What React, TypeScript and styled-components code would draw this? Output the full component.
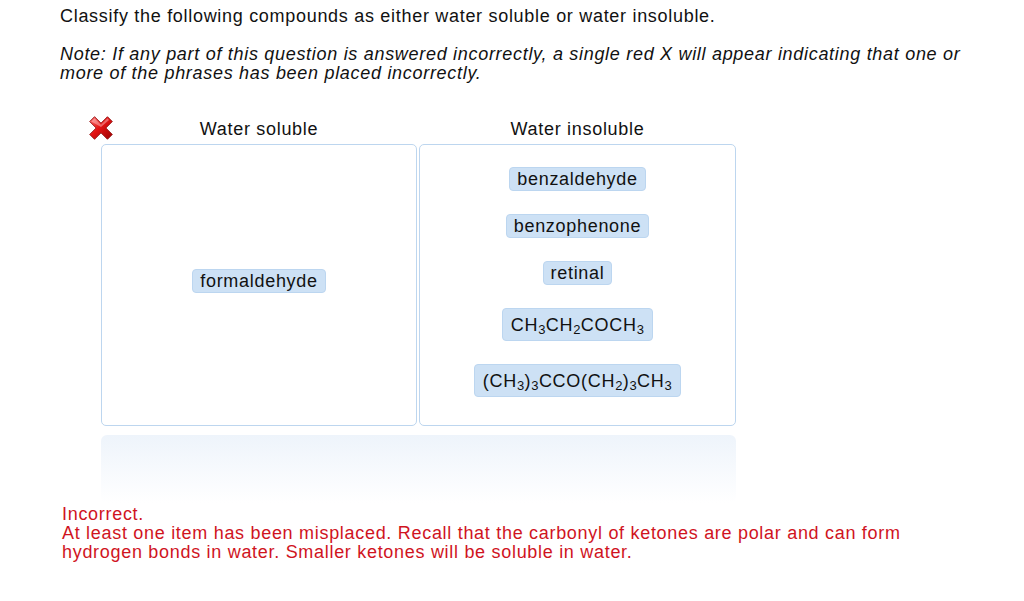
import React from "react";
import styled, { createGlobalStyle } from "styled-components";

const Global = createGlobalStyle`
  html, body { margin: 0; padding: 0; background: #fff; }
  body { font-family: "Liberation Sans", Arial, sans-serif; color: #111; }
`;

const Page = styled.div`
  padding: 6px 0 0 60px;
  width: 964px;
  font-size: 18px;
  letter-spacing: 0.7px;
`;

const Title = styled.p`
  margin: 0;
  line-height: 20px;
`;

const Note = styled.p`
  margin: 19px 0 0 0;
  line-height: 19px;
  font-style: italic;
  width: 910px;
`;

const Board = styled.div`
  position: relative;
  margin: 35px 0 0 41px;
  width: 635px;
`;

const Mark = styled.svg`
  position: absolute;
  left: -14px;
  top: -4px;
  width: 28px;
  height: 28px;
`;

const Columns = styled.div`
  display: grid;
  grid-template-columns: 316px 317px;
  column-gap: 2px;
`;

const Column = styled.div`
  display: flex;
  flex-direction: column;
`;

const Header = styled.div`
  height: 26px;
  line-height: 20px;
  text-align: center;
  padding-top: 1px;
  box-sizing: border-box;
`;

const Bin = styled.div<{ $center?: boolean }>`
  box-sizing: border-box;
  height: 282px;
  border: 1px solid #bdd6ef;
  border-radius: 5px;
  display: flex;
  flex-direction: column;
  align-items: center;
  justify-content: ${(p) => (p.$center ? "center" : "flex-start")};
  padding: ${(p) => (p.$center ? "0 0 9px 0" : "22px 0 0 0")};
  gap: 23px;
`;

const Pill = styled.div<{ $tall?: boolean }>`
  box-sizing: border-box;
  height: ${(p) => (p.$tall ? "33px" : "24px")};
  padding: ${(p) => (p.$tall ? "2px 8px 0" : "0 7px")};
  background: #cde1f5;
  border: 1px solid #bcd6f0;
  border-radius: 4px;
  line-height: ${(p) => (p.$tall ? "29px" : "22px")};
  color: #111;
  white-space: nowrap;
`;

const Sub = styled.sub`
  font-size: 13px;
  letter-spacing: 0.4px;
  vertical-align: -3px;
  line-height: 0;
`;

const Tray = styled.div`
  margin-top: 9px;
  height: 68px;
  border-radius: 6px;
  background: linear-gradient(to bottom, #eef4fb, #ffffff);
`;

const Feedback = styled.div`
  margin: 2px 0 0 2px;
  color: #d0141e;
  line-height: 19px;
  width: 900px;
`;

const Formula: React.FC<{ parts: (string | [string])[] }> = ({ parts }) => (
  <>
    {parts.map((p, i) =>
      Array.isArray(p) ? <Sub key={i}>{p[0]}</Sub> : <React.Fragment key={i}>{p}</React.Fragment>
    )}
  </>
);

export default function App() {
  return (
    <>
      <Global />
      <Page>
        <Title>Classify the following compounds as either water soluble or water insoluble.</Title>
        <Note>
          Note: If any part of this question is answered incorrectly, a single red X will appear indicating that one or
          more of the phrases has been placed incorrectly.
        </Note>
        <Board>
          <Mark viewBox="0 0 26 26">
            <defs>
              <linearGradient id="xr" x1="0" y1="0" x2="1" y2="1">
                <stop offset="0" stopColor="#ff7a7a" />
                <stop offset="0.45" stopColor="#e41414" />
                <stop offset="1" stopColor="#9a0000" />
              </linearGradient>
            </defs>
            <path
              d="M2.5 7 L7 2.5 L13 8.5 L19 2.5 L23.5 7 L17.5 13 L23.5 19 L19 23.5 L13 17.5 L7 23.5 L2.5 19 L8.5 13 Z"
              fill="url(#xr)"
              stroke="#8e0a0a"
              strokeWidth="0.8"
              strokeLinejoin="round"
            />
            <path d="M4 7 L7 4 L13 10 L19 4 L20.5 5.5 L13 12 Z" fill="#ffffff" opacity="0.35" />
          </Mark>
          <Columns>
            <Column>
              <Header>Water soluble</Header>
              <Bin $center>
                <Pill>formaldehyde</Pill>
              </Bin>
            </Column>
            <Column>
              <Header>Water insoluble</Header>
              <Bin>
                <Pill>benzaldehyde</Pill>
                <Pill>benzophenone</Pill>
                <Pill>retinal</Pill>
                <Pill $tall>
                  <Formula parts={["CH", ["3"], "CH", ["2"], "COCH", ["3"]]} />
                </Pill>
                <Pill $tall>
                  <Formula parts={["(CH", ["3"], ")", ["3"], "CCO(CH", ["2"], ")", ["3"], "CH", ["3"]]} />
                </Pill>
              </Bin>
            </Column>
          </Columns>
          <Tray />
        </Board>
        <Feedback>
          Incorrect.
          <br />
          At least one item has been misplaced. Recall that the carbonyl of ketones are polar and can form hydrogen
          bonds in water. Smaller ketones will be soluble in water.
        </Feedback>
      </Page>
    </>
  );
}
